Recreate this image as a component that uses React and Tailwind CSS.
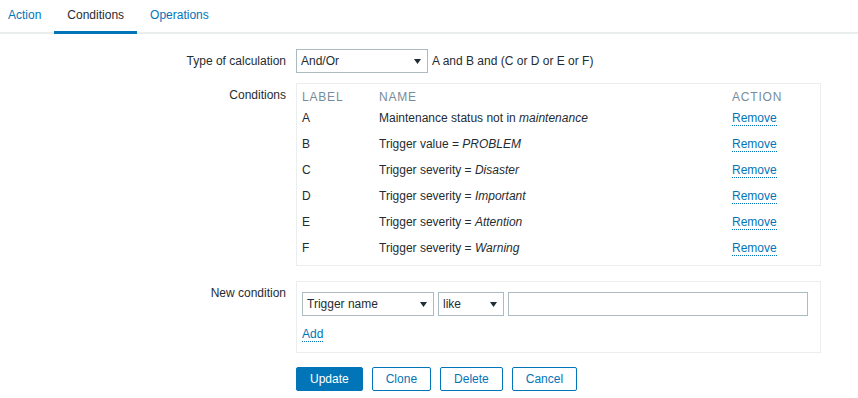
import React from "react"

const conditions = [
  { label: "A", text: "Maintenance status not in ", value: "maintenance" },
  { label: "B", text: "Trigger value = ", value: "PROBLEM" },
  { label: "C", text: "Trigger severity = ", value: "Disaster" },
  { label: "D", text: "Trigger severity = ", value: "Important" },
  { label: "E", text: "Trigger severity = ", value: "Attention" },
  { label: "F", text: "Trigger severity = ", value: "Warning" },
]

function Arrow() {
  return (
    <svg width="7" height="5" viewBox="0 0 7 5" className="shrink-0">
      <polygon points="0,0 7,0 3.5,5" fill="#1f2c33" />
    </svg>
  )
}

function Select({ value, className }) {
  return (
    <div
      className={`flex h-[24px] items-center justify-between border border-[#acbbc2] bg-white pl-[4px] pr-[6px] ${className}`}
    >
      <span>{value}</span>
      <Arrow />
    </div>
  )
}

function FormLabel({ children }) {
  return <div className="pt-[5px] text-right leading-[14px]">{children}</div>
}

function App() {
  return (
    <div
      className="min-h-screen bg-white text-[12px] text-[#1f2c33]"
      style={{ fontFamily: '"Liberation Sans", Arial, sans-serif' }}
    >
      <div className="flex h-[34px] items-start border-b-2 border-[#ebeeef]">
        <div className="flex h-[30px] items-center pl-[8px] pr-[13px] text-[#0275b8]">Action</div>
        <div className="flex h-[34px] items-center border-b-[3px] border-[#0275b8] px-[13px] pb-[1px]">
          Conditions
        </div>
        <div className="flex h-[30px] items-center px-[13px] text-[#0275b8]">Operations</div>
      </div>

      <div className="grid grid-cols-[286px_1fr] gap-x-[10px] pt-[15px]">
        <FormLabel>Type of calculation</FormLabel>
        <div className="flex items-center">
          <Select value="And/Or" className="w-[132px]" />
          <span className="ml-[4px]">A and B and (C or D or E or F)</span>
        </div>

        <div className="mt-[10px]">
          <FormLabel>Conditions</FormLabel>
        </div>
        <div className="mt-[10px] w-[525px] border border-[#ebeeef] px-[5px] pt-[5px] pb-[5px]">
          <div className="flex h-[15px] items-center uppercase tracking-[0.8px] text-[#768d99]">
            <span className="w-[77px]">Label</span>
            <span className="flex-1">Name</span>
            <span className="w-[83px]">Action</span>
          </div>
          {conditions.map((c) => (
            <div key={c.label} className="flex h-[26px] items-center pt-[1px]">
              <span className="w-[77px]">{c.label}</span>
              <span className="flex-1">
                {c.text}
                <i>{c.value}</i>
              </span>
              <span className="w-[83px]">
                <span className="border-b border-dotted border-[#0275b8] leading-[14px] text-[#0275b8]">
                  Remove
                </span>
              </span>
            </div>
          ))}
        </div>

        <div className="mt-[15px]">
          <FormLabel>New condition</FormLabel>
        </div>
        <div className="mt-[15px] w-[525px] border border-[#ebeeef] pl-[5px] pt-[10px] pb-[10px]">
          <div className="flex items-center">
            <Select value="Trigger name" className="w-[132px]" />
            <Select value="like" className="ml-[4px] w-[66px]" />
            <div className="ml-[4px] h-[24px] w-[300px] border border-[#acbbc2] bg-white" />
          </div>
          <div className="mt-[12px] flex">
            <span className="border-b border-dotted border-[#0275b8] leading-[13px] text-[#0275b8]">
              Add
            </span>
          </div>
        </div>

        <div />
        <div className="mt-[14px] flex gap-[9px]">
          <button className="h-[24px] rounded-[2px] border border-[#0275b8] bg-[#0275b8] px-[13px] text-white">
            Update
          </button>
          <button className="h-[24px] rounded-[2px] border border-[#0275b8] bg-white px-[13px] text-[#0275b8]">
            Clone
          </button>
          <button className="h-[24px] rounded-[2px] border border-[#0275b8] bg-white px-[13px] text-[#0275b8]">
            Delete
          </button>
          <button className="h-[24px] rounded-[2px] border border-[#0275b8] bg-white px-[13px] text-[#0275b8]">
            Cancel
          </button>
        </div>
      </div>
    </div>
  )
}

export default App
